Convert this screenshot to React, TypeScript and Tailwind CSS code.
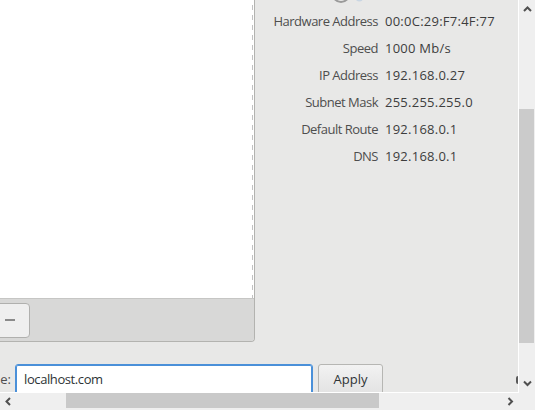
const rows = [
  { label: 'Hardware Address', value: '00:0C:29:F7:4F:77' },
  { label: 'Speed', value: '1000 Mb/s' },
  { label: 'IP Address', value: '192.168.0.27' },
  { label: 'Subnet Mask', value: '255.255.255.0' },
  { label: 'Default Route', value: '192.168.0.1' },
  { label: 'DNS', value: '192.168.0.1' },
]

function Chevron({ dir }: { dir: 'up' | 'down' | 'left' | 'right' }) {
  const d = {
    up: 'M1 5 L4.5 1.5 L8 5',
    down: 'M1 1.5 L4.5 5 L8 1.5',
    left: 'M5 1 L1.5 4.5 L5 8',
    right: 'M1.5 1 L5 4.5 L1.5 8',
  }[dir]
  const horiz = dir === 'left' || dir === 'right'
  return (
    <svg width={horiz ? 7 : 9} height={horiz ? 9 : 7} viewBox={horiz ? '0 0 7 9' : '0 0 9 7'} fill="none">
      <path d={d} stroke="#505050" strokeWidth="2" strokeLinejoin="miter" />
    </svg>
  )
}

export default function App() {
  return (
    <div className="flex h-[410px] w-[535px] overflow-hidden bg-[#efefef] font-['Open_Sans',sans-serif] text-[13px]">
      <div className="flex w-[518px] flex-col">
        {/* main view */}
        <div className="flex h-[392px] shrink-0 flex-col overflow-hidden bg-[#e8e8e7]">
          <div className="flex h-[342px] shrink-0">
            {/* device list panel */}
            <div className="flex w-[255px] shrink-0 flex-col overflow-hidden rounded-br-[4px] border-r border-b border-[#b3b3b0]">
              <div className="flex h-[298px] shrink-0 bg-white">
                <div className="flex-1" />
                <div className="w-px bg-[repeating-linear-gradient(to_bottom,transparent_0_5px,#c2c2c2_5px_10px)]" />
                <div className="w-px" />
              </div>
              <div className="flex flex-1 items-center border-t border-[#c6c6c4] bg-[#d8d8d7]">
                <button className="-ml-[10px] flex h-[35px] w-[40px] items-center justify-end rounded-[4px] border border-[#b0b0ae] bg-[#efefef] pr-[14px]">
                  <span className="block h-[2px] w-[10px] bg-[#8a8a8a]" />
                </button>
              </div>
            </div>

            {/* details */}
            <div className="flex flex-1 flex-col">
              <svg className="-mt-[37px] ml-[70px] shrink-0" width="50" height="40" viewBox="0 0 50 40">
                <ellipse cx="16" cy="20" rx="12" ry="19" fill="#e8e8e7" stroke="#9a9a9a" strokeWidth="2" />
                <path d="M31 36 Q34 39 37 37" stroke="#c9d6e3" strokeWidth="1.5" fill="none" />
              </svg>
              <div className="mt-[5px] grid grid-cols-[123px_1fr] gap-x-[7px] leading-[27px]">
                {rows.map((r) => (
                  <div key={r.label} className="contents">
                    <div className="whitespace-nowrap text-right tracking-[-0.5px] text-[#4e4e4e]">{r.label}</div>
                    <div className="whitespace-nowrap tracking-[0.25px] text-[#3d3d3d]">{r.value}</div>
                  </div>
                ))}
              </div>
            </div>
          </div>

          {/* hostname row */}
          <div className="mt-[22px] flex h-[32px] shrink-0 items-center">
            <div className="flex w-[11px] justify-end overflow-hidden whitespace-nowrap text-[#4e4e4e]">Hostname:</div>
            <div className="ml-[4px] flex h-[32px] w-[298px] items-center rounded-[3px] border border-[#4a90d9] bg-white pl-[8px] tracking-[-0.4px] text-[#2e3436] shadow-[inset_0_0_0_1px_#4a90d9]">
              localhost.com
            </div>
            <button className="ml-[5px] flex h-[32px] w-[65px] items-center justify-center rounded-[3px] border border-[#b6b6b3] bg-[linear-gradient(to_bottom,#f2f2f2,#e2e2e2)] text-[#2e3436]">
              Apply
            </button>
            <div className="ml-auto h-[8px] w-[2px] rounded-l-full bg-[#5a5a5a]" />
          </div>
        </div>

        {/* horizontal scrollbar */}
        <div className="flex h-[18px] items-start border-t border-white bg-[#efefef]">
          <div className="flex h-[16px] w-[16px] items-center justify-center">
            <Chevron dir="left" />
          </div>
          <div className="w-[50px]" />
          <div className="h-[15px] w-[313px] bg-[#c9c9c9]" />
          <div className="flex-1" />
          <div className="flex h-[17px] w-[16px] items-center justify-center">
            <Chevron dir="right" />
          </div>
        </div>
      </div>

      {/* vertical scrollbar */}
      <div className="flex w-[17px] flex-col">
        <div className="flex h-[393px] flex-col border-l border-white">
          <div className="flex h-[18px] items-center justify-center">
            <Chevron dir="up" />
          </div>
          <div className="h-[91px]" />
          <div className="h-[234px] w-[15px] bg-[#cbcbcb]" />
          <div className="flex-1" />
          <div className="flex h-[18px] items-center justify-center">
            <Chevron dir="down" />
          </div>
          <div className="h-[1px]" />
        </div>
      </div>
    </div>
  )
}
